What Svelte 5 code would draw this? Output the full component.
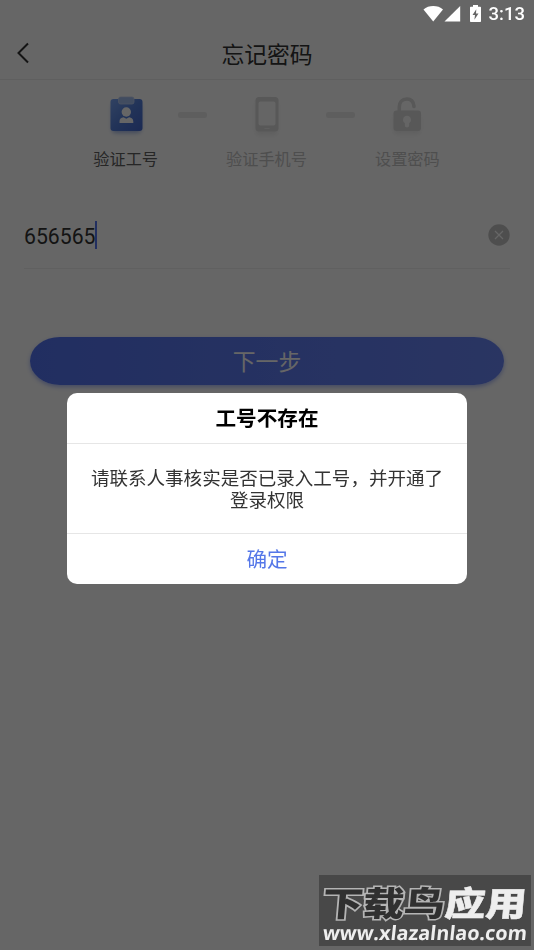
<script>
	let jobNumber = '656565';
	let showDialog = true;

	function clearInput() {
		jobNumber = '';
	}

	function closeDialog() {
		showDialog = false;
	}
</script>

<div class="app">
	<header class="nav">
		<button class="back" aria-label="返回">
			<svg width="12" height="22" viewBox="0 0 12 22">
				<path d="M11 1.5 1.5 11 11 20.5" fill="none" stroke="#333" stroke-width="2" />
			</svg>
		</button>
		<h1>忘记密码</h1>
	</header>

	<div class="steps">
		<div class="step active">
			<svg width="40" height="44" viewBox="0 0 40 44">
				<defs>
					<linearGradient id="board" x1="0" y1="0" x2="1" y2="1">
						<stop offset="0" stop-color="#7ba6f5" />
						<stop offset="0.5" stop-color="#5580dc" />
						<stop offset="1" stop-color="#4569cf" />
					</linearGradient>
				</defs>
				<rect class="soft" x="6" y="9" width="29" height="30" rx="4" fill="#7794d8" />
				<rect x="4.5" y="5" width="32" height="32" rx="3" fill="url(#board)" />
				<rect x="12.5" y="3" width="15.5" height="7" rx="2" fill="#a3bdf0" stroke="#bccff3" stroke-width=".8" />
				<circle cx="20.3" cy="18" r="4.7" fill="#fff" />
				<path d="M13.5 29v-1.5c0-2.5 1.5-4 4-4.3l2.8 1.6 2.8-1.6c2.5.3 4.2 1.8 4.2 4.3V29z" fill="#fff" />
			</svg>
			<span>验证工号</span>
		</div>
		<i class="dash"></i>
		<div class="step">
			<svg width="40" height="44" viewBox="0 0 40 44">
				<rect class="soft" x="9" y="6" width="21" height="35" rx="3" fill="#e5e5e5" />
				<rect x="8.5" y="3" width="23" height="34.5" rx="3.5" fill="#dbdbdb" />
				<rect x="11.5" y="7.5" width="17" height="24" rx="2" fill="#fdfdfd" />
				<path d="M17.5 34.5h5" stroke="#eee" />
			</svg>
			<span>验证手机号</span>
		</div>
		<i class="dash"></i>
		<div class="step">
			<svg width="40" height="44" viewBox="0 0 40 44">
				<rect class="soft" x="7" y="20" width="26" height="20" rx="3" fill="#e5e5e5" />
				<path d="M12.3 18v-5c0-5 2.9-8 7.5-8 4.2 0 6.8 2.5 7.2 7.5" fill="none" stroke="#dbdbdb" stroke-width="3.6" stroke-linecap="round" />
				<rect x="6.5" y="16.5" width="27.5" height="20.5" rx="3" fill="#dbdbdb" />
				<path d="M20 21.8a4 4 0 0 1 2.2 7.3v2.2a2.2 2.2 0 0 1-4.4 0v-2.2a4 4 0 0 1 2.2-7.3z" fill="#fdfdfd" />
			</svg>
			<span>设置密码</span>
		</div>
	</div>

	<div class="field">
		<span class="value">{jobNumber}</span>
		<i class="caret"></i>
		<button class="clear" aria-label="清除" on:click={clearInput}>
			<svg width="22" height="22" viewBox="0 0 22 22">
				<circle cx="11" cy="11" r="10.7" fill="#c4c4c4" />
				<path d="m7 7 8 8m0-8-8 8" stroke="#fff" stroke-width="1.2" />
			</svg>
		</button>
	</div>

	<button class="next">下一步</button>
</div>

<div class="mask" class:open={showDialog}>
	<div class="status">
		<svg width="38" height="18" viewBox="0 0 38 18">
			<path d="M.5 4.500C5.500-.1 15-.1 20 4.500L10.200 16.500z" fill="#fff" />
			<path d="M37.200 1v15.500H21.500z" fill="#fff" />
		</svg>
		<svg class="battery" width="11" height="18" viewBox="0 0 11 18">
			<path d="M3 0h5v1.800h2.200q.8 0 .8.800v13.600q0 .8-.8.8H.8q-.8 0-.8-.8V2.600q0-.8.8-.8H3z" fill="#fff" />
			<path d="M6.300 4.300 2.500 10H5l-.6 4.800L8.500 8.500H6z" fill="#666" />
		</svg>
		<span>3:13</span>
	</div>

	{#if showDialog}
		<div class="dialog">
			<h2>工号不存在</h2>
			<p>请联系人事核实是否已录入工号，并开通了登录权限</p>
			<button on:click={closeDialog}>确定</button>
		</div>
	{/if}

	<div class="watermark">
		<div class="brand"><b>下载鸟</b><strong>应用</strong></div>
		<div class="site">www.xlazalnlao.com</div>
	</div>
</div>

<style>
	:global(body) {
		margin: 0;
		background: #fff;
	}

	.app,
	.mask {
		width: 534px;
		height: 950px;
		overflow: hidden;
		box-sizing: border-box;
		font-family: Roboto, 'Noto Sans CJK SC', sans-serif;
	}

	.app {
		padding-top: 27px;
		background: #fff;
	}

	button {
		border: 0;
		padding: 0;
		background: none;
		font-family: inherit;
		cursor: pointer;
	}

	.nav {
		display: grid;
		grid-template-columns: 100px 1fr 100px;
		align-items: center;
		height: 52px;
		border-bottom: 1px solid #ededed;
	}

	.back {
		width: 12px;
		height: 22px;
		margin-left: 17px;
	}

	svg {
		display: block;
		flex-shrink: 0;
	}

	h1 {
		margin: 0;
		padding-top: 5px;
		font-size: 22.8px;
		line-height: 34px;
		font-weight: 400;
		text-align: center;
		color: #333;
	}

	.steps {
		display: flex;
		justify-content: center;
		gap: 19.5px;
		padding: 14px 1px 0 0;
		height: 90px;
		box-sizing: border-box;
	}

	.step {
		display: flex;
		flex-direction: column;
		align-items: center;
		font-size: 16.2px;
		line-height: 24px;
		color: #c4c4c4;
		white-space: nowrap;
	}

	.step span {
		margin-top: 10px;
	}

	.step.active {
		color: #606060;
	}

	.soft {
		filter: blur(2px);
		opacity: 0.7;
	}

	.dash {
		width: 29px;
		height: 6px;
		margin-top: 18px;
		border-radius: 2px;
		background: #ececec;
	}

	.field {
		display: flex;
		align-items: center;
		height: 66px;
		margin: 32px 24px 0;
		border-bottom: 1px solid #f0f0f0;
	}

	.value {
		padding-top: 3px;
		font-size: 21.2px;
		line-height: 28px;
		color: #333;
	}

	.caret {
		width: 2px;
		height: 28px;
		background: #5577f0;
	}

	.clear {
		margin-left: auto;
	}

	.next {
		display: block;
		width: 474px;
		height: 48px;
		padding-top: 4px;
		margin: 68px auto 0 30px;
		border-radius: 30px / 24px;
		background: linear-gradient(90deg, #5474f2, #6985f5);
		box-shadow: 0 2px 4px rgba(84, 116, 242, 0.5);
		color: #fff;
		font-size: 22.8px;
		line-height: 44px;
	}

	.mask {
		position: fixed;
		inset: 0;
		display: flex;
		flex-direction: column;
		align-items: center;
	}

	.mask.open {
		background: rgba(0, 0, 0, 0.6);
	}

	.status {
		display: flex;
		align-items: center;
		align-self: flex-end;
		height: 27px;
		padding-right: 9px;
		color: #fff;
		font-size: 18.5px;
		font-weight: 500;
	}

	.battery {
		margin: 0 8px 0 9px;
	}

	.dialog {
		width: 400px;
		margin-top: 366px;
		border-radius: 10px;
		background: #fff;
		text-align: center;
		overflow: hidden;
	}

	.dialog h2 {
		margin: 0;
		height: 50px;
		border-bottom: 1px solid #e6e6e6;
		font-size: 20.6px;
		line-height: 52px;
		font-weight: 600;
		color: #000;
	}

	.dialog p {
		margin: 0;
		padding: 24px 23px 23px;
		height: 42px;
		font-size: 18.55px;
		line-height: 22px;
		color: #333;
	}

	.dialog button {
		width: 100%;
		height: 51px;
		padding-top: 2px;
		border-top: 1px solid #e6e6e6;
		font-size: 20.6px;
		line-height: 48px;
		color: #5577e8;
	}

	.watermark {
		position: absolute;
		left: 319px;
		top: 875px;
		width: 212px;
		height: 71px;
		background: #484848;
		color: #eee;
		white-space: nowrap;
	}

	.brand {
		display: flex;
		justify-content: center;
		padding-top: 11px;
		font-size: 34px;
		line-height: 36px;
		transform: skewX(-5deg) scaleX(1.2);
	}

	.brand b {
		font-weight: 900;
		color: #303030;
		-webkit-text-stroke: 3px #b4b4b4;
		paint-order: stroke fill;
	}

	.brand strong {
		font-weight: 900;
		-webkit-text-stroke: 0.5px #eee;
	}

	.site {
		font-family: 'Open Sans', sans-serif;
		font-size: 19.8px;
		line-height: 22px;
		font-weight: 700;
		text-align: center;
		transform: skewX(-6deg);
	}
</style>
